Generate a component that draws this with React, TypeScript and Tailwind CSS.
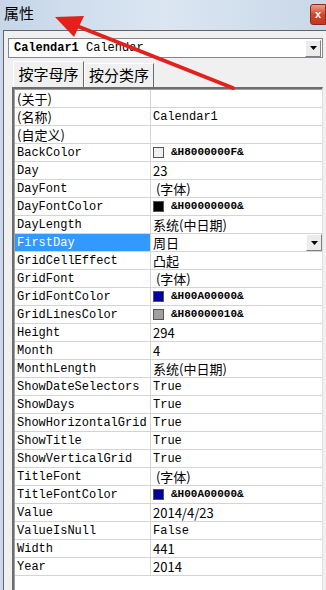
import React from "react";

type Row = {
  name: string;
  value?: string;
  swatch?: string;
  kind?: "mono" | "cjk" | "code";
  selected?: boolean;
};

const rows: Row[] = [
  { name: "(关于)", value: "" },
  { name: "(名称)", value: "Calendar1", kind: "mono" },
  { name: "(自定义)", value: "" },
  { name: "BackColor", value: "&H8000000F&", swatch: "#f0f0f0", kind: "code" },
  { name: "Day", value: "23", kind: "cjk" },
  { name: "DayFont", value: " (字体)", kind: "cjk" },
  { name: "DayFontColor", value: "&H00000000&", swatch: "#000000", kind: "code" },
  { name: "DayLength", value: "系统(中日期)", kind: "cjk" },
  { name: "FirstDay", value: "周日", kind: "cjk", selected: true },
  { name: "GridCellEffect", value: "凸起", kind: "cjk" },
  { name: "GridFont", value: " (字体)", kind: "cjk" },
  { name: "GridFontColor", value: "&H00A00000&", swatch: "#0000a0", kind: "code" },
  { name: "GridLinesColor", value: "&H80000010&", swatch: "#a0a0a0", kind: "code" },
  { name: "Height", value: "294", kind: "cjk" },
  { name: "Month", value: "4", kind: "cjk" },
  { name: "MonthLength", value: "系统(中日期)", kind: "cjk" },
  { name: "ShowDateSelectors", value: "True", kind: "mono" },
  { name: "ShowDays", value: "True", kind: "mono" },
  { name: "ShowHorizontalGrid", value: "True", kind: "mono" },
  { name: "ShowTitle", value: "True", kind: "mono" },
  { name: "ShowVerticalGrid", value: "True", kind: "mono" },
  { name: "TitleFont", value: " (字体)", kind: "cjk" },
  { name: "TitleFontColor", value: "&H00A00000&", swatch: "#0000a0", kind: "code" },
  { name: "Value", value: "2014/4/23", kind: "cjk" },
  { name: "ValueIsNull", value: "False", kind: "mono" },
  { name: "Width", value: "441", kind: "cjk" },
  { name: "Year", value: "2014", kind: "cjk" },
];

const mono = "font-['Liberation_Mono','Noto_Sans_CJK_SC',monospace]";
const cjk = "font-['Noto_Sans_CJK_SC',sans-serif]";

const DropBtn = () => (
  <div className="w-[16px] h-full flex items-center justify-center bg-[#ececec] border border-t-white border-l-white border-r-[#808080] border-b-[#808080]">
    <svg width="7" height="4" viewBox="0 0 7 4">
      <path d="M0 0h7L3.5 4z" fill="#000" />
    </svg>
  </div>
);

const App = () => {
  return (
    <div className="relative w-[326px] h-[590px] overflow-hidden bg-[#c9d9ea]">
      {/* title bar */}
      <div className="h-[30px] flex items-center justify-between bg-gradient-to-r from-[#c6d6e8] via-[#dbe6f2] to-[#c9d8e8]">
        <span className={`${cjk} text-[15px] text-black pl-[4px] pb-[3px]`}>属性</span>
        <div className="w-[16px] h-[21px] mb-[1px] rounded-l-[3px] bg-gradient-to-b from-[#e8a08c] via-[#d2452b] to-[#c7381f] border border-[#8c2a1a] flex items-center justify-center text-white text-[11px] font-bold font-['Liberation_Sans',sans-serif]">
          x
        </div>
      </div>

      {/* window body */}
      <div className="ml-[3px] h-[560px] bg-[#f0f0f0] border-l border-t border-[#646464] pt-[7px] pl-[4px] pr-[3px]">
        {/* object combo */}
        <div className="h-[20px] flex items-center bg-white border border-[#828790] pl-[5px] pr-[1px]">
          <div className={`${mono} text-[12px] text-black flex-1 whitespace-nowrap`}>
            <span className="font-bold">Calendar1</span> Calendar
          </div>
          <div className="h-[17px]">
            <DropBtn />
          </div>
        </div>

        {/* tabs */}
        <div className="mt-[3px] h-[26px] flex items-end pl-[5px]">
          <div className={`${cjk} h-[26px] w-[71px] flex items-center justify-center text-[15px] text-black border-t border-l border-white border-r border-r-[#6b6b6b] bg-[#f0f0f0]`}>
            按字母序
          </div>
          <div className={`${cjk} h-[24px] w-[70px] flex items-center justify-center text-[15px] text-black border-t border-l border-white border-r border-r-[#6b6b6b]`}>
            按分类序
          </div>
        </div>

        {/* property grid */}
        <div className="h-[504px] bg-white border-t-2 border-l-2 border-[#6d6d6d] border-r border-r-[#e0e0e0] ml-[4px]">
          <div className="border-t border-l border-[#a0a0a0] h-full">
            {rows.map((r) => (
              <div key={r.name} className="h-[18px] flex border-b border-[#d4d4d4]">
                <div
                  className={`w-[136px] shrink-0 flex items-center pl-[2px] border-r border-[#d4d4d4] whitespace-nowrap overflow-hidden ${
                    r.selected ? "bg-[#3399ff] text-white" : "text-black"
                  } ${r.name.startsWith("(") ? `${cjk} text-[13px]` : `${mono} text-[12px]`}`}
                >
                  {r.name}
                </div>
                <div className="flex-1 flex items-center pl-[2px] whitespace-nowrap overflow-hidden text-black">
                  {r.swatch && (
                    <span
                      className="w-[11px] h-[11px] mr-[7px] border border-[#555] shrink-0"
                      style={{ backgroundColor: r.swatch }}
                    />
                  )}
                  <span
                    className={`flex-1 whitespace-pre ${
                      r.kind === "mono"
                        ? `${mono} text-[12px]`
                        : r.kind === "code"
                        ? `${mono} text-[11px] font-bold`
                        : `${cjk} text-[13px]`
                    }`}
                  >
                    {r.value}
                  </span>
                  {r.selected && (
                    <div className="h-[17px]">
                      <DropBtn />
                    </div>
                  )}
                </div>
              </div>
            ))}
          </div>
        </div>
      </div>

      {/* red annotation arrow */}
      <svg className="absolute left-0 top-0 pointer-events-none" width="326" height="120">
        <line x1="233" y1="88" x2="72" y2="24" stroke="#e3201b" strokeWidth="4" strokeLinecap="round" />
        <path d="M55 17 L84 16 L74 37 Z" fill="#e3201b" />
      </svg>
    </div>
  );
};

export default App;
